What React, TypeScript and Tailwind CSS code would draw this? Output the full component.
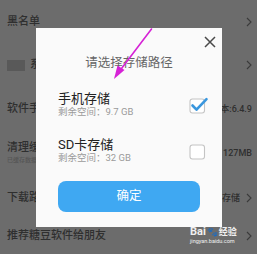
import React from 'react';

const Chevron: React.FC = () => (
  <svg width="6" height="10" viewBox="0 0 6 10" className="shrink-0">
    <path d="M1 1l4 4-4 4" fill="none" stroke="#3a3a3a" strokeWidth="1.1" />
  </svg>
);

const Row: React.FC<{ className?: string; left: React.ReactNode; right?: React.ReactNode }> = ({ className, left, right }) => (
  <div className={`flex items-center justify-between pl-[7px] pr-[5px] ${className ?? ''}`}>
    <div>{left}</div>
    <div className="flex items-center gap-[6px]">{right}</div>
  </div>
);

const CheckBox: React.FC<{ checked?: boolean }> = ({ checked }) => (
  <svg width="20" height="18" viewBox="0 0 20 18" className="shrink-0">
    <rect x="1" y="3" width="14.5" height="14" rx="2.5" fill="#fff" stroke="#c4c4c4" strokeWidth="1.1" />
    {checked && (
      <path d="M3.5 9.5l4 4.2L17.5 3.2" fill="none" stroke="#3a97de" strokeWidth="2.6" strokeLinecap="round" strokeLinejoin="round" />
    )}
  </svg>
);

const StorageOption: React.FC<{ title: string; free: string; checked?: boolean }> = ({ title, free, checked }) => (
  <div className="flex items-center justify-between">
    <div className="flex flex-col">
      <span className="text-[13px] leading-[15px] text-[#222]">{title}</span>
      <span className="text-[9.5px] leading-[12px] text-[#9a9a9a]">{free}</span>
    </div>
    <CheckBox checked={checked} />
  </div>
);

export default function App() {
  return (
    <div
      className="relative w-[257px] h-[254px] overflow-hidden bg-[#6c6c6c] text-[#2f2f2f]"
      style={{ fontFamily: 'Roboto, "Noto Sans CJK SC", sans-serif' }}
    >
      {/* background settings list */}
      <div className="flex flex-col text-[11px] leading-[14px] font-medium">
        <Row className="h-[42px] pt-[1px]" left="黑名单" right={<Chevron />} />
        <Row
          className="h-[46px]"
          left={
            <div className="flex items-center gap-[5px]">
              <span className="inline-block w-[18px] h-[11px] bg-[#595959]" />
              <span>系</span>
            </div>
          }
          right={<Chevron />}
        />
        <Row className="h-[42px]" left="软件手" right={<span className="text-[9px]">版本:6.4.9</span>} />
        <Row
          className="h-[45px]"
          left={
            <div className="flex flex-col">
              <span>清理缓存</span>
              <span className="text-[6px] leading-[9px] text-[#555]">已缓存数据</span>
            </div>
          }
          right={<span className="text-[9px]">127MB</span>}
        />
        <Row className="h-[45px]" left="下载路径" right={<><span className="text-[9px]">内部存储</span><Chevron /></>} />
        <Row className="h-[34px] pb-[2px]" left="推荐糖豆软件给朋友" right={<Chevron />} />
      </div>

      {/* watermark */}
      <div className="absolute left-[190px] top-[226px] flex flex-col items-start text-white/90">
        <div className="flex items-center text-[11px] leading-[12px] font-bold">
          <span>Bai</span>
          <span className="text-[9px] mx-[1px]">🐾</span>
          <span className="text-[9px]">经验</span>
        </div>
        <span className="text-[5.5px] leading-[7px]">jingyan.baidu.com</span>
      </div>

      {/* dialog */}
      <div className="absolute left-[36px] top-[28px] w-[186px] h-[199px] bg-[#fafafa] flex flex-col px-[22px] pt-[28px] pb-[15px]">
        <svg width="12" height="12" viewBox="0 0 12 12" className="absolute right-[6px] top-[8px]">
          <path d="M1 1l10 10M11 1L1 11" stroke="#4a4a4a" strokeWidth="1.5" />
        </svg>
        <div className="text-center text-[12.5px] leading-[14px] text-[#666]">请选择存储路径</div>
        <div className="mt-[21px] -mr-[9px]">
          <StorageOption title="手机存储" free="剩余空间：9.7 GB" checked />
        </div>
        <div className="mt-[19px] -mr-[9px]">
          <StorageOption title="SD卡存储" free="剩余空间：32 GB" />
        </div>
        <button className="mt-[17px] h-[31px] w-full rounded-[8px] bg-[#3fa8f2] text-white text-[12.5px]">确定</button>
      </div>

      {/* annotation arrow */}
      <svg className="absolute left-0 top-0 pointer-events-none" width="257" height="254" viewBox="0 0 257 254">
        <path d="M151.5 29 L120 70.5" stroke="#d622d6" strokeWidth="1.6" strokeLinecap="round" />
        <path d="M114 79 L124.5 70 L117.5 65.5 Z" fill="#d622d6" />
      </svg>
    </div>
  );
}
